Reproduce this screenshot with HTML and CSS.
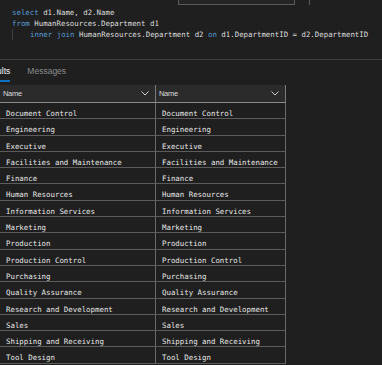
FILE: index.html
```html
<!DOCTYPE html>
<html>
    <head>
        <title>Query results</title>
        <link rel="stylesheet" href="styles.css">
    </head>
    <body>
        <div id="editor">
            <div class="find-box"></div>
            <div class="ruler"></div>
            <div class="code">
                <div class="line"><span class="kw">select</span> d1.Name, d2.Name</div>
                <div class="line"><span class="kw">from</span> HumanResources.Department d1</div>
                <div class="line indent"><span class="kw">inner join</span> HumanResources.Department d2 <span class="kw">on</span> d1.DepartmentID = d2.DepartmentID</div>
            </div>
        </div>

        <div id="results">
            <div class="tabs">
                <span class="tab active">Results</span>
                <span class="tab">Messages</span>
            </div>

            <div class="grid">
                <div class="head">Name<svg class="chevron" width="8" height="5" viewBox="0 0 8 5"><polyline points="0.5,0.5 4,4 7.5,0.5" /></svg></div>
                <div class="head">Name<svg class="chevron" width="8" height="5" viewBox="0 0 8 5"><polyline points="0.5,0.5 4,4 7.5,0.5" /></svg></div>

                <div class="cell">Document Control</div><div class="cell">Document Control</div>
                <div class="cell">Engineering</div><div class="cell">Engineering</div>
                <div class="cell">Executive</div><div class="cell">Executive</div>
                <div class="cell">Facilities and Maintenance</div><div class="cell">Facilities and Maintenance</div>
                <div class="cell">Finance</div><div class="cell">Finance</div>
                <div class="cell">Human Resources</div><div class="cell">Human Resources</div>
                <div class="cell">Information Services</div><div class="cell">Information Services</div>
                <div class="cell">Marketing</div><div class="cell">Marketing</div>
                <div class="cell">Production</div><div class="cell">Production</div>
                <div class="cell">Production Control</div><div class="cell">Production Control</div>
                <div class="cell">Purchasing</div><div class="cell">Purchasing</div>
                <div class="cell">Quality Assurance</div><div class="cell">Quality Assurance</div>
                <div class="cell">Research and Development</div><div class="cell">Research and Development</div>
                <div class="cell">Sales</div><div class="cell">Sales</div>
                <div class="cell">Shipping and Receiving</div><div class="cell">Shipping and Receiving</div>
                <div class="cell">Tool Design</div><div class="cell">Tool Design</div>
            </div>
        </div>
    </body>
</html>
```

FILE: styles.css
```css
body{
    margin: 0;
    width: 382px;
    height: 365px;
    overflow: hidden;
    background-color: #1f1f1f;
    color: #d4d4d4;
    font-family: "Liberation Sans", Arial, sans-serif;
}

#editor{
    position: relative;
    height: 60px;
    box-sizing: border-box;
    border-bottom: 1px solid #3d3d3d;
}

/* find widget peeking in from the top */
.find-box{
    position: absolute;
    top: -2px;
    left: 178px;
    width: 115px;
    height: 5px;
    border: 1px solid #5a5a5a;
    background-color: #252525;
}

.ruler{
    position: absolute;
    top: 0;
    left: 309px;
    width: 1px;
    height: 5px;
    background-color: #5a5a5a;
}

.code{
    padding: 7px 0 0 12px;
    font-family: "DejaVu Sans Mono", monospace;
    font-size: 7.4px;
    line-height: 11px;
    color: #dcdcdc;
}

.line{
    white-space: pre;
}

.kw{
    color: #569cd6;
}

.line.indent{
    padding-left: 18px;
    box-shadow: inset 1px 0 0 #404040;
}

.tabs{
    display: flex;
    gap: 17px;
    height: 25px;
    margin-left: -18px;
    font-size: 8.5px;
    line-height: 22px;
}

.tab{
    color: #8b8b8b;
}

.tab.active{
    color: #f4f4f4;
    border-bottom: 2px solid #0e70c0;
    height: 20px;
}

.grid{
    display: grid;
    grid-template-columns: 156px 130px;
    width: 286px;
}

.head{
    display: flex;
    align-items: center;
    justify-content: space-between;
    height: 18px;
    box-sizing: border-box;
    padding: 0 6px 0 3px;
    background-color: #2b2b2b;
    border-right: 1px solid #7a7a7a;
    border-bottom: 1px solid #8a8a8a;
    font-size: 7.5px;
    letter-spacing: -0.3px;
    color: #d8d8d8;
}

.chevron polyline{
    fill: none;
    stroke: #cccccc;
    stroke-width: 1;
}

.cell{
    height: 16.3px;
    box-sizing: border-box;
    padding: 6px 0 0 6px;
    border-right: 1px solid #6a6a6a;
    border-bottom: 1px solid #5c5c5c;
    font-family: "DejaVu Sans Mono", monospace;
    font-size: 7.4px;
    line-height: 9px;
    white-space: nowrap;
    overflow: hidden;
    color: #e6e6e6;
}
```
